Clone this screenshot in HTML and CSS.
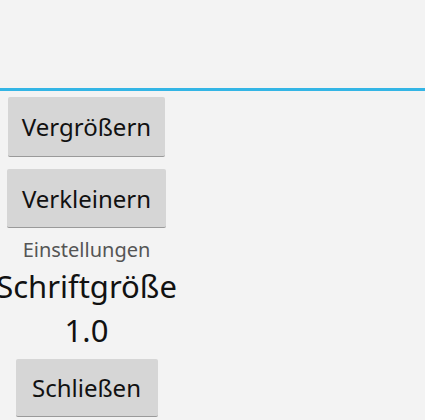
FILE: index.html
```html
<!DOCTYPE html>
<html>
<head>
<meta charset="utf-8">
<link rel="stylesheet" href="styles.css">
</head>
<body>
<div class="header"></div>
<div class="divider"></div>
<div class="column">
  <button class="btn btn-wide">Vergrößern</button>
  <button class="btn btn-wide2">Verkleinern</button>
  <div class="label">Einstellungen</div>
  <div class="title">Schriftgröße</div>
  <div class="value">1.0</div>
  <button class="btn btn-close">Schließen</button>
</div>
</body>
</html>
```
FILE: styles.css
```css
html, body {
  margin: 0;
  padding: 0;
  background: #f3f3f3;
  font-family: "Noto Sans", "Liberation Sans", sans-serif;
  overflow: hidden;
  width: 425px;
  height: 420px;
}
.header {
  height: 88px;
}
.divider {
  height: 3px;
  background: #33b5e5;
}
.column {
  width: 173px;
  display: flex;
  flex-direction: column;
  align-items: center;
  padding-top: 6px;
}
.btn {
  font-family: "Noto Sans", "Liberation Sans", sans-serif;
  font-size: 24px;
  color: #111;
  background: #d6d6d6;
  border: none;
  border-bottom: 1px solid #9a9a9a;
  border-radius: 2px;
  height: 60px;
  padding: 0;
}
.btn-wide { width: 157px; }
.btn-wide2 { width: 159px; margin-top: 12px; height: 59px; }
.label {
  margin-top: 10px;
  font-size: 20px;
  color: #555;
  line-height: 24px;
  white-space: nowrap;
}
.title {
  font-size: 31px;
  color: #111;
  line-height: 36px;
  white-space: nowrap;
  margin-top: 6px;
}
.value {
  font-size: 31px;
  color: #111;
  line-height: 36px;
  margin-top: 8px;
}
.btn-close {
  width: 142px;
  height: 58px;
  margin-top: 11px;
}
```
